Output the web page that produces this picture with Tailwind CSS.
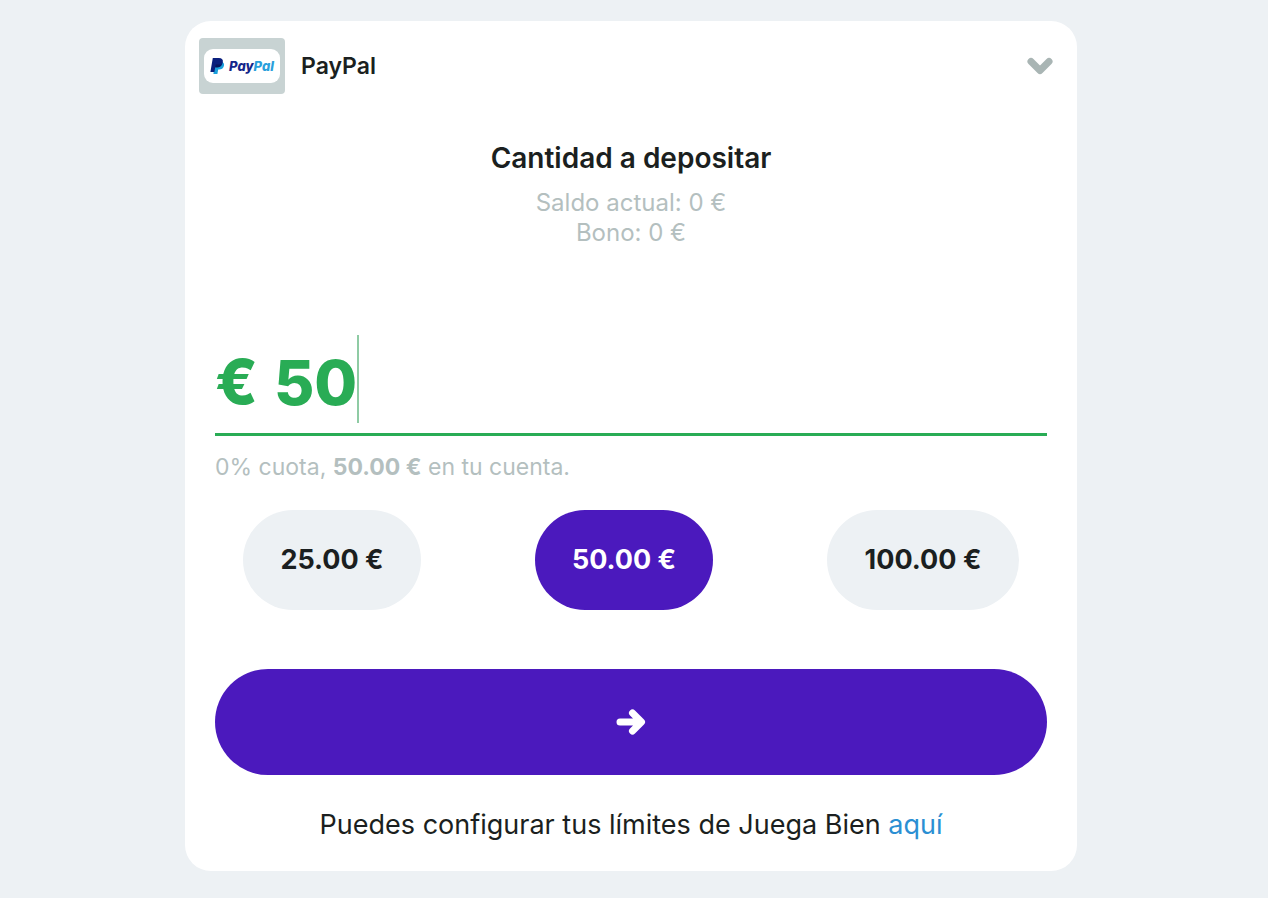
<!DOCTYPE html>
<html lang="es">
<head>
  <meta charset="UTF-8" />
  <meta name="viewport" content="width=device-width, initial-scale=1" />
  <title>Depositar - PayPal</title>
  <script src="https://cdn.jsdelivr.net/npm/@tailwindcss/browser@4"></script>
</head>
<body class="min-h-screen bg-[#edf1f4] pt-[21px] pr-1.5 pb-[27px] font-['Inter','Liberation_Sans',sans-serif] text-[#1b1f20]">
  <main class="mx-auto max-w-[892px] rounded-[26px] bg-white pb-7">
    <header class="flex items-center pt-[17px] pr-6 pl-[14px]">
      <div class="flex h-14 w-[86px] items-center justify-center rounded bg-[#c8d3d3]">
        <div class="flex h-[34px] w-[76px] items-center justify-center gap-1 rounded-[9px] bg-white">
          <svg class="h-[17px] w-[15px]" viewBox="0 0 15 17" aria-hidden="true">
            <path d="M5 3.5h6.200c2.600.6 3.300 2.300 2.700 4.400-.6 2.400-2.400 3.500-4.800 3.500H8.200L7.400 16H3.400z" fill="#1aa0dc" />
            <path d="M2.800 0h6c3.200 0 4.600 1.700 4 4.500-.6 3-2.700 4.500-5.600 4.500H5.300l-.9 5H.4z" fill="#0a1f7d" />
            <path d="M5.800 6.500h6c-.8 2-2.400 2.900-4.600 2.900H5.300z" fill="#08155c" />
          </svg>
          <span class="text-[13px] font-extrabold italic leading-4 text-[#14268a]">Pay<span class="text-[#2a9fdc]">Pal</span></span>
        </div>
      </div>
      <h1 class="ml-4 text-[23px] font-semibold leading-7">PayPal</h1>
      <button type="button" class="ml-auto" aria-label="Cambiar método de pago">
        <svg class="h-[20px] w-[28px]" viewBox="0 0 28 20" fill="none" stroke="#a9b5b4" stroke-width="7" stroke-linecap="round" stroke-linejoin="round" aria-hidden="true">
          <path d="M6 5.500l9 9 9-9" />
        </svg>
      </button>
    </header>

    <section class="mt-[46px] text-center">
      <h2 class="text-[28px] font-semibold leading-9">Cantidad a depositar</h2>
      <p class="mt-3 text-[24px] leading-[30px] text-[#b4bfbf]">Saldo actual: 0 €<br>Bono: 0 €</p>
    </section>

    <form class="mt-[87px] px-[30px]">
      <div class="flex h-[101px] items-start border-b-3 border-[#29ac55] text-[62px] font-extrabold text-[#29ac55]">
        <label for="cantidad" class="mr-4 leading-[94px]">€</label>
        <input id="cantidad" type="text" inputmode="decimal" value="50" class="field-sizing-content h-[94px] outline-none" />
        <span class="h-[88px] w-0.5 bg-[#8fcba4]"></span>
      </div>
      <p class="mt-4 text-[23px] leading-[30px] text-[#b4bfbf]">0% cuota, <strong class="font-bold">50.00 €</strong> en tu cuenta.</p>

      <div class="mt-7 flex justify-between px-7 text-[27px] font-bold">
        <button type="button" class="h-[100px] min-w-[178px] rounded-full bg-[#edf1f4]">25.00 €</button>
        <button type="button" class="h-[100px] min-w-[178px] rounded-full bg-[#4b19bd] text-white">50.00 €</button>
        <button type="button" class="h-[100px] min-w-[192px] rounded-full bg-[#edf1f4]">100.00 €</button>
      </div>

      <button type="submit" class="mt-[59px] flex h-[106px] w-full items-center justify-center rounded-full bg-[#4b19bd]" aria-label="Continuar">
        <svg class="h-[28px] w-[32px]" viewBox="0 0 32 28" fill="none" stroke="#fff" stroke-width="7" stroke-linecap="round" stroke-linejoin="round" aria-hidden="true">
          <path d="M5 14h20M17.500 5l9 9-9 9" />
        </svg>
      </button>
    </form>

    <p class="mt-8 text-center text-[27px] leading-9">Puedes configurar tus límites de Juega Bien <a href="#" class="text-[#2b8fd3]">aquí</a></p>
  </main>
</body>
</html>
